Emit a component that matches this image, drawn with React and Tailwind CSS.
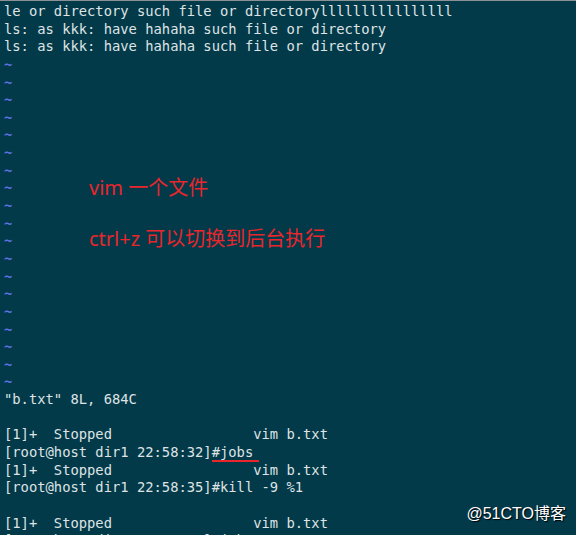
import React from "react";

const mono = { fontFamily: '"DejaVu Sans Mono", "Liberation Mono", monospace' };

function Line({ children, className = "" }) {
  return (
    <div className={`h-[17.65px] leading-[17.65px] whitespace-pre ${className}`}>
      {children}
    </div>
  );
}

export default function App() {
  const tildes = [...Array(19)].map((_, i) => i);
  const stopped = "[1]+  Stopped                 vim b.txt";

  return (
    <div className="relative w-[576px] h-[535px] overflow-hidden bg-[#023a4a] border-t border-[#8a9296]">
      <div className="pl-[4px] pt-[2px] text-[13.8px] text-[#dfe3e4]" style={mono}>
        <Line>le or directory such file or directoryllllllllllllllll</Line>
        <Line>ls: as kkk: have hahaha such file or directory</Line>
        <Line>ls: as kkk: have hahaha such file or directory</Line>
        {tildes.map((i) => (
          <Line key={i} className="text-[#5d72e0] font-bold">~</Line>
        ))}
        <Line>"b.txt" 8L, 684C</Line>
        <Line> </Line>
        <Line>{stopped}</Line>
        <Line>
          [root@host dir1 22:58:32]
          <span className="relative">
            #jobs
            <span className="absolute left-0 -right-[6px] top-[16px] h-[2px] bg-[#e8262c]" />
          </span>
        </Line>
        <Line>{stopped}</Line>
        <Line>[root@host dir1 22:58:35]#kill -9 %1</Line>
        <Line> </Line>
        <Line>{stopped}</Line>
        <Line>[root@host dir1 22:58:36]#jobs</Line>
      </div>

      <div
        className="absolute left-[89px] top-[173px] flex flex-col gap-[24px] text-[20px] leading-[27px] text-[#e8262c]"
        style={{ fontFamily: '"Noto Sans", "Noto Sans CJK SC", sans-serif' }}
      >
        <span>vim 一个文件</span>
        <span>ctrl+z 可以切换到后台执行</span>
      </div>

      <div
        className="absolute right-[10px] bottom-[9px] text-[16px] text-white [text-shadow:1px_1px_1px_#000]"
        style={{ fontFamily: '"Liberation Sans", "Noto Sans CJK SC", sans-serif' }}
      >
        @51CTO博客
      </div>
    </div>
  );
}
